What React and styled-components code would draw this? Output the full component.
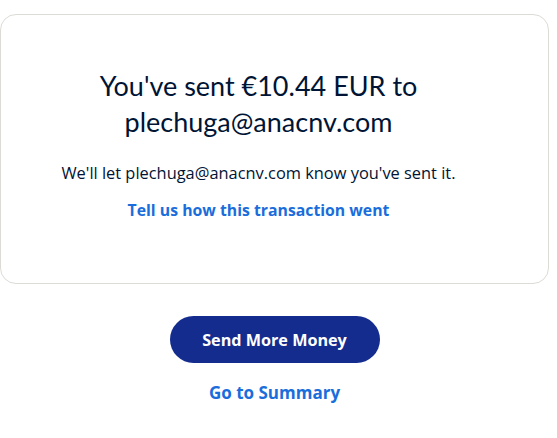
import React from 'react';
import styled, { createGlobalStyle } from 'styled-components';

const GlobalStyle = createGlobalStyle`
  html, body {
    margin: 0;
    padding: 0;
    background: #ffffff;
    font-family: "Open Sans", "Noto Sans", sans-serif;
  }
`;

const Page = styled.div`
  width: 557px;
  padding-top: 14px;
  box-sizing: border-box;
  display: flex;
  flex-direction: column;
  align-items: center;
`;

const Card = styled.section`
  align-self: flex-start;
  width: 549px;
  height: 270px;
  box-sizing: border-box;
  border: 1px solid #dddbd6;
  border-radius: 16px;
  padding: 53px 32px 0 0;
  display: flex;
  flex-direction: column;
  align-items: center;
  text-align: center;
`;

const Title = styled.h1`
  margin: 0;
  font-family: Lato, "Noto Sans", sans-serif;
  font-size: 27px;
  line-height: 36px;
  font-weight: 400;
  color: #001435;
`;

const Message = styled.p`
  margin: 21px 0 0;
  font-size: 16.4px;
  line-height: 24px;
  color: #001435;
`;

const TextLink = styled.a`
  display: block;
  margin-top: ${({ gap }) => gap || 0}px;
  font-size: ${({ size }) => size || 16}px;
  line-height: 24px;
  font-weight: 700;
  color: #1a6ddb;
  text-decoration: none;
  cursor: pointer;
`;

const Actions = styled.div`
  margin-top: 32px;
  padding-right: 8px;
  display: flex;
  flex-direction: column;
  align-items: center;
`;

const PrimaryButton = styled.button`
  width: 210px;
  height: 47px;
  border: none;
  border-radius: 24px;
  background: #142c8e;
  color: #ffffff;
  font-family: inherit;
  font-size: 16.2px;
  font-weight: 700;
  cursor: pointer;
`;

export default function App() {
  return (
    <>
      <GlobalStyle />
      <Page>
        <Card>
          <Title>
            You've sent €10.44 EUR to
            <br />
            plechuga@anacnv.com
          </Title>
          <Message>We'll let plechuga@anacnv.com know you've sent it.</Message>
          <TextLink gap={13} size={15.8}>Tell us how this transaction went</TextLink>
        </Card>
        <Actions>
          <PrimaryButton>Send More Money</PrimaryButton>
          <TextLink gap={18} size={17}>Go to Summary</TextLink>
        </Actions>
      </Page>
    </>
  );
}
